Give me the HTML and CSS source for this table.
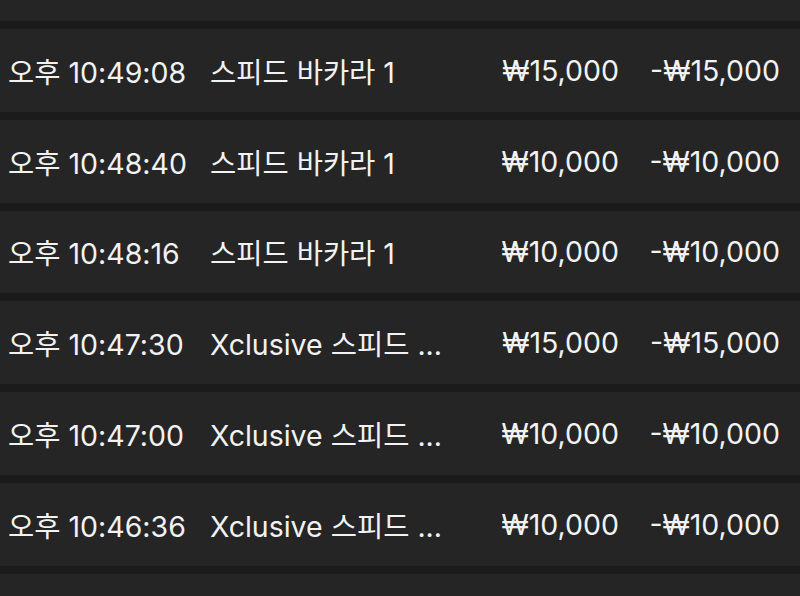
FILE: index.html
```html
<!DOCTYPE html>
<html lang="ko">
<head>
<meta charset="utf-8">
<link rel="stylesheet" href="styles.css">
</head>
<body>
<div class="list">
  <div class="row"></div>
  <div class="row"><span class="time">오후 10:49:08</span><span class="name">스피드 바카라 1</span><span class="amt">₩15,000</span><span class="pay">-₩15,000</span></div>
  <div class="row"><span class="time">오후 10:48:40</span><span class="name">스피드 바카라 1</span><span class="amt">₩10,000</span><span class="pay">-₩10,000</span></div>
  <div class="row"><span class="time">오후 10:48:16</span><span class="name">스피드 바카라 1</span><span class="amt">₩10,000</span><span class="pay">-₩10,000</span></div>
  <div class="row"><span class="time">오후 10:47:30</span><span class="name">Xclusive 스피드 ...</span><span class="amt">₩15,000</span><span class="pay">-₩15,000</span></div>
  <div class="row"><span class="time">오후 10:47:00</span><span class="name">Xclusive 스피드 ...</span><span class="amt">₩10,000</span><span class="pay">-₩10,000</span></div>
  <div class="row"><span class="time">오후 10:46:36</span><span class="name">Xclusive 스피드 ...</span><span class="amt">₩10,000</span><span class="pay">-₩10,000</span></div>
  <div class="row"></div>
</div>
</body>
</html>
```
FILE: styles.css
```css
html, body {
  margin: 0;
  padding: 0;
  background: #1b1b1b;
  overflow: hidden;
  height: 596px;
}
.list {
  display: flex;
  flex-direction: column;
  gap: 8px;
  margin-top: -61.8px;
}
.row {
  height: 82.8px;
  flex: none;
  background: #252525;
  display: grid;
  grid-template-columns: 202px 1fr auto 161px;
  align-items: center;
  padding: 0 20px 0 8px;
  color: #f2f2f2;
  font-family: Inter, "Noto Sans CJK KR", sans-serif;
  font-size: 28.5px;
  white-space: nowrap;
}
.amt, .pay {
  text-align: right;
}
```
